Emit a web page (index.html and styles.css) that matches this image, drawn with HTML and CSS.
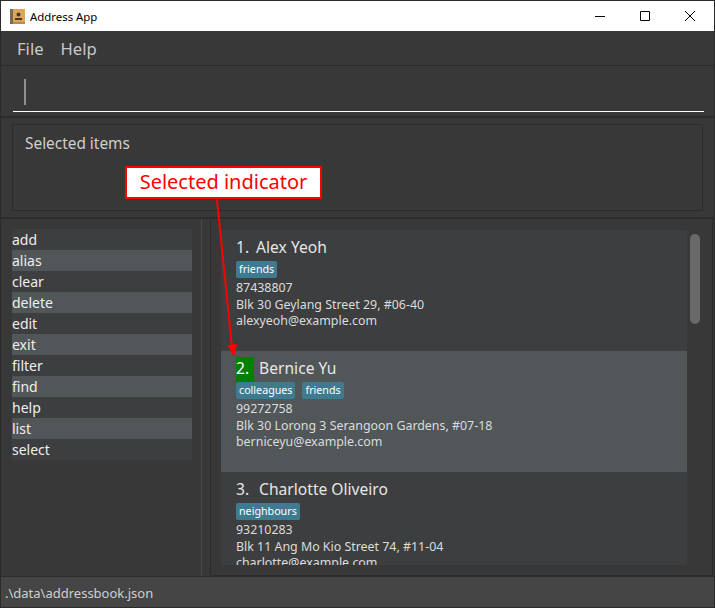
FILE: index.html
```html
<!DOCTYPE html>
<html lang="en">
<head>
    <meta charset="UTF-8">
    <meta name="viewport" content="width=device-width, initial-scale=1.0">
    <title>Address App</title>
    <link rel="stylesheet" href="styles.css">
</head>
<body>
    <div class="window">
        <div class="titlebar">
            <svg class="app-icon" width="15" height="15" viewBox="0 0 15 15">
                <rect x="0" y="0" width="15" height="15" fill="#dca55c"/>
                <rect x="0" y="0" width="3" height="15" fill="#7a6a55"/>
                <rect x="3" y="13" width="12" height="2" fill="#b98a4c"/>
                <circle cx="8.5" cy="5.5" r="2" fill="#4a3520"/>
                <rect x="5" y="9" width="7" height="2" fill="#4a3520"/>
            </svg>
            <span class="app-name">Address App</span>
            <div class="win-buttons">
                <svg width="12" height="12" viewBox="0 0 12 12"><path d="M1 6.5h10" stroke="#000" fill="none"/></svg>
                <svg width="12" height="12" viewBox="0 0 12 12"><path d="M1.5 1.5h9v9h-9z" stroke="#000" fill="none"/></svg>
                <svg width="12" height="12" viewBox="0 0 12 12"><path d="M1 1l10 10M11 1L1 11" stroke="#000" fill="none"/></svg>
            </div>
        </div>

        <div class="menubar">
            <span>File</span>
            <span>Help</span>
        </div>

        <div class="command-pane">
            <div class="command-box"><div class="caret"></div></div>
        </div>

        <div class="result-pane">
            <div class="result-box">Selected items</div>
        </div>

        <div class="main">
            <div class="sidebar">
                <ul class="commands">
                    <li>add</li>
                    <li>alias</li>
                    <li>clear</li>
                    <li>delete</li>
                    <li>edit</li>
                    <li>exit</li>
                    <li>filter</li>
                    <li>find</li>
                    <li>help</li>
                    <li>list</li>
                    <li>select</li>
                </ul>
            </div>
            <div class="person-pane">
                <div class="person-list">
                    <div class="card">
                        <div class="name"><span class="index">1.</span><span>Alex Yeoh</span></div>
                        <div class="tags"><span class="tag">friends</span></div>
                        <div class="line">87438807</div>
                        <div class="line">Blk 30 Geylang Street 29, #06-40</div>
                        <div class="line">alexyeoh@example.com</div>
                    </div>
                    <div class="card selected">
                        <div class="name"><span class="index">2.</span><span>Bernice Yu</span></div>
                        <div class="tags"><span class="tag">colleagues</span><span class="tag">friends</span></div>
                        <div class="line">99272758</div>
                        <div class="line">Blk 30 Lorong 3 Serangoon Gardens, #07-18</div>
                        <div class="line">berniceyu@example.com</div>
                    </div>
                    <div class="card">
                        <div class="name"><span class="index">3.</span><span>Charlotte Oliveiro</span></div>
                        <div class="tags"><span class="tag">neighbours</span></div>
                        <div class="line">93210283</div>
                        <div class="line">Blk 11 Ang Mo Kio Street 74, #11-04</div>
                        <div class="line">charlotte@example.com</div>
                    </div>
                </div>
                <div class="scrollbar"><div class="thumb"></div></div>
            </div>
        </div>

        <div class="statusbar">.\data\addressbook.json</div>
    </div>

    <!-- annotation drawn on top of the screenshot -->
    <div class="callout">Selected indicator</div>
    <svg class="arrow" width="40" height="170" viewBox="0 0 40 170">
        <path d="M3 1L18 148" stroke="#f00" stroke-width="2" fill="none"/>
        <path d="M13.5 146L23 145L20 158z" fill="#f00"/>
    </svg>
</body>
</html>
```

FILE: styles.css
```css
body {
    margin: 0;
    background: #2b2b2b;
    font-family: "Noto Sans", "Open Sans", sans-serif;
    color: #fff;
}

.window {
    width: 713px;
    height: 606px;
    margin: 1px;
    display: flex;
    flex-direction: column;
    background: #383838;
}

.titlebar {
    height: 30px;
    flex: none;
    display: flex;
    align-items: center;
    padding-left: 9px;
    background: #fff;
    color: #000;
    font-size: 11.4px;
}

.app-icon {
    margin-right: 5px;
}

.win-buttons {
    margin-left: auto;
    display: flex;
    align-items: center;
    gap: 33px;
    padding-right: 18px;
}

.menubar {
    height: 35px;
    flex: none;
    display: flex;
    align-items: center;
    gap: 17px;
    padding-left: 16px;
    font-size: 16.6px;
    color: #c8c8c8;
    border-bottom: 1px solid #2c2c2c;
    box-sizing: border-box;
}

.command-pane {
    height: 52px;
    flex: none;
    padding: 0 10px 0 12px;
    border-bottom: 2px solid #2c2c2c;
    box-sizing: border-box;
}

.command-box {
    height: 46px;
    padding-top: 13px;
    box-sizing: border-box;
    border-bottom: 1px solid #fff;
}

.caret {
    width: 2px;
    height: 26px;
    margin-left: 11px;
    background: #8f8f8f;
}

.result-pane {
    height: 101px;
    flex: none;
    padding: 6px 11px 0 11px;
    border-bottom: 2px solid #2c2c2c;
    box-sizing: border-box;
}

.result-box {
    height: 87px;
    padding: 8px 12px;
    box-sizing: border-box;
    border: 1px solid #2c2c2c;
    font-size: 15.4px;
    color: #cfcfcf;
}

.main {
    flex: 1;
    display: flex;
    min-height: 0;
}

.sidebar {
    width: 201px;
    flex: none;
    padding: 10px 0 0 11px;
    box-sizing: border-box;
    border-right: 1px solid #4a4a4a;
}

.commands {
    width: 180px;
    margin: 0;
    padding: 0;
    list-style: none;
    font-size: 14px;
    color: #eee;
}

.commands li {
    height: 21px;
    line-height: 21px;
    background: #3c3e3f;
}

.commands li:nth-child(even) {
    background: #515658;
}

.person-pane {
    width: 503px;
    margin-left: 8px;
    height: 357px;
    padding: 11px 0 10px 10px;
    display: flex;
    box-sizing: border-box;
    border-left: 1px solid #2c2c2c;
    border-right: 1px solid #2c2c2c;
    border-bottom: 1px solid #2c2c2c;
}

.person-list {
    width: 466px;
    height: 335px;
    overflow: hidden;
    background: #3c3e3f;
}

.card {
    height: 121px;
    padding: 6px 15px 0;
    box-sizing: border-box;
    background: #3c3e3f;
    font-size: 12.4px;
    color: #dcdcdc;
}

.card.selected {
    background: #515658;
}

.name {
    display: flex;
    height: 25px;
    line-height: 22px;
    font-size: 15.6px;
    color: #e6e6e6;
}

.index {
    margin-right: 5px;
    padding-right: 5px;
}

.card:first-child .index {
    margin-right: 2px;
}

.selected .index {
    background: #008000;
    color: #fff;
}

.tags {
    display: flex;
    gap: 7px;
    height: 17px;
    margin-bottom: 1px;
}

.tag {
    height: 17px;
    line-height: 17px;
    padding: 0 3px;
    border-radius: 2px;
    background: #3e7b91;
    font-size: 10.7px;
    color: #fff;
}

.line {
    height: 16.6px;
    line-height: 17px;
}

.scrollbar {
    width: 14px;
    padding: 4px 0 0 3px;
    box-sizing: border-box;
}

.thumb {
    width: 10px;
    height: 90px;
    border-radius: 5px;
    background: #696969;
}

.statusbar {
    height: 31px;
    flex: none;
    line-height: 33px;
    padding-left: 4px;
    background: #454545;
    border-top: 1px solid #2c2c2c;
    box-sizing: border-box;
    font-size: 13px;
    color: #d0d0d0;
}

.callout {
    position: absolute;
    left: 125px;
    top: 166px;
    width: 197px;
    height: 33px;
    box-sizing: border-box;
    border: 2px solid #f00;
    background: #fff;
    color: #f00;
    font-size: 20px;
    line-height: 27px;
    text-align: center;
}

.arrow {
    position: absolute;
    left: 214px;
    top: 199px;
}
```
